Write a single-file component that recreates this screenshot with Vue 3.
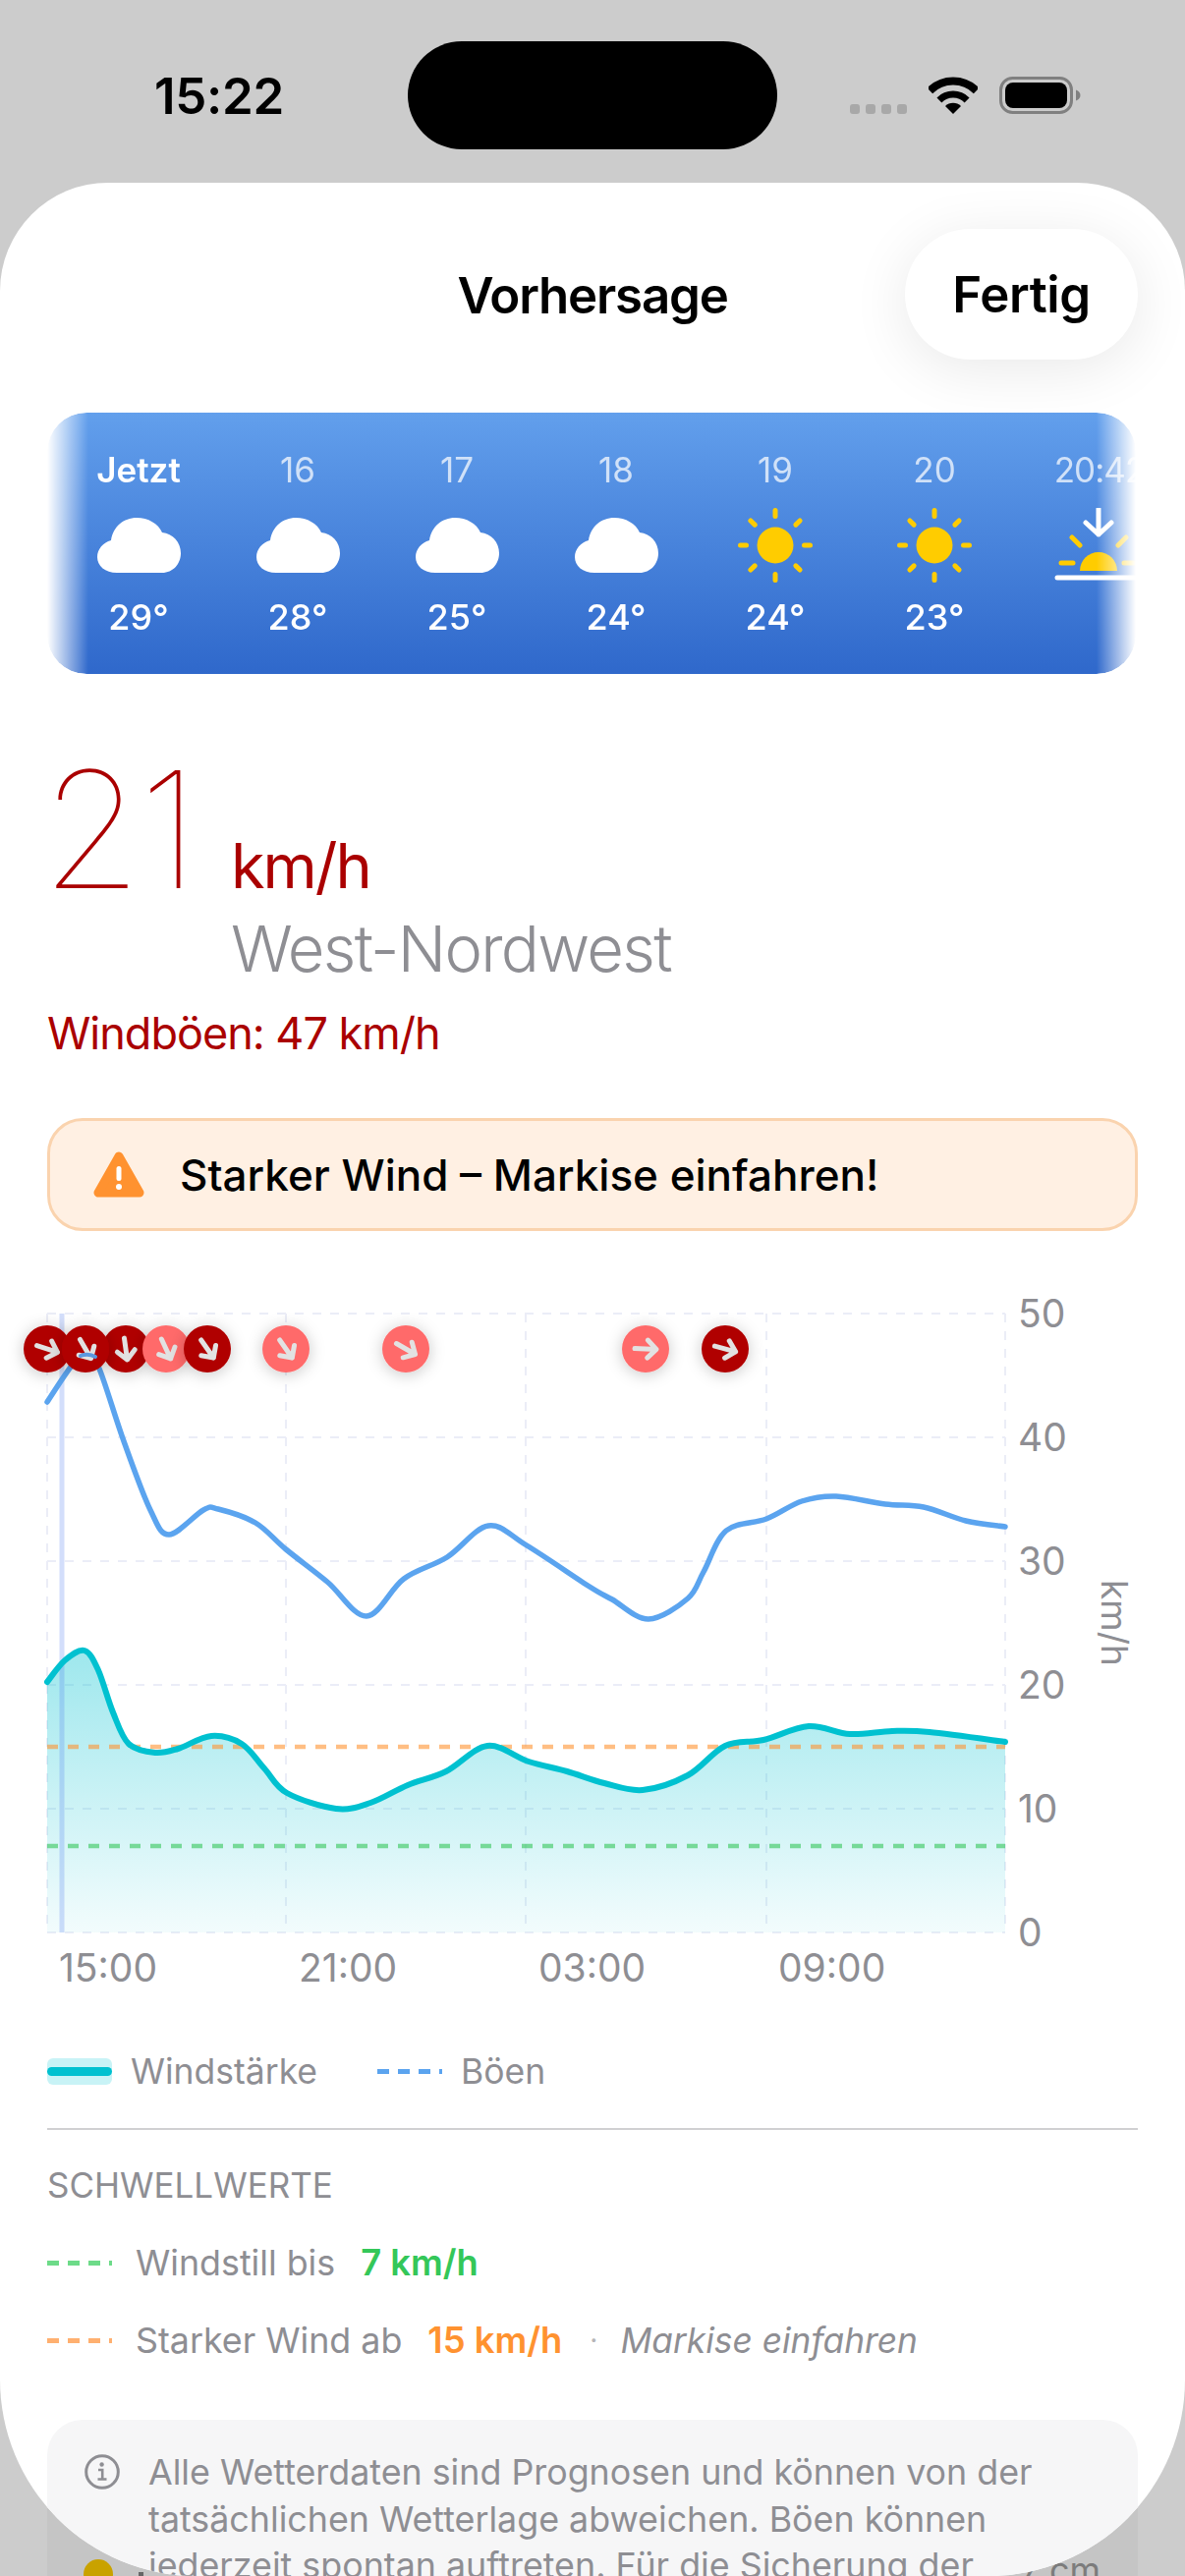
<script setup>
const hours = [
  { label: "Jetzt", temp: "29°", icon: "cloud", now: true },
  { label: "16", temp: "28°", icon: "cloud" },
  { label: "17", temp: "25°", icon: "cloud" },
  { label: "18", temp: "24°", icon: "cloud" },
  { label: "19", temp: "24°", icon: "sun" },
  { label: "20", temp: "23°", icon: "sun" },
  { label: "20:42", temp: "", icon: "sunset", wide: true },
];

const sunRays = [0, 45, 90, 135, 180, 225, 270, 315];

// chart coordinates, viewBox starts at y=1300
const GUST = [
  [48, 1427], [73, 1390], [88, 1377], [101, 1393], [126, 1467], [153, 1537], [172, 1562],
  [207, 1537], [222, 1536], [260, 1550], [291, 1577], [333, 1610], [373, 1645], [411, 1607],
  [455, 1585], [497, 1553], [536, 1573], [600, 1615], [623, 1628], [660, 1648], [700, 1627],
  [716, 1600], [739, 1558], [780, 1546], [816, 1528], [851, 1523], [901, 1531], [940, 1534],
  [983, 1548], [1023, 1554],
];
const WIND = [
  [48, 1712], [66, 1690], [86, 1680], [100, 1700], [115, 1743], [131, 1775], [158, 1784],
  [181, 1780], [215, 1767], [246, 1775], [269, 1800], [292, 1825], [342, 1841], [377, 1835],
  [415, 1817], [454, 1803], [496, 1777], [538, 1793], [577, 1803], [615, 1815], [654, 1822],
  [700, 1807], [738, 1777], [777, 1771], [823, 1757], [865, 1765], [908, 1762], [946, 1763],
  [1023, 1773],
];

function smooth(points) {
  let d = `M${points[0][0]} ${points[0][1]}`;
  for (let i = 0; i < points.length - 1; i++) {
    const p0 = points[i - 1] || points[i];
    const p1 = points[i];
    const p2 = points[i + 1];
    const p3 = points[i + 2] || p2;
    const c1x = p1[0] + (p2[0] - p0[0]) / 6;
    const c1y = p1[1] + (p2[1] - p0[1]) / 6;
    const c2x = p2[0] - (p3[0] - p1[0]) / 6;
    const c2y = p2[1] - (p3[1] - p1[1]) / 6;
    d += ` C${c1x.toFixed(1)} ${c1y.toFixed(1)} ${c2x.toFixed(1)} ${c2y.toFixed(1)} ${p2[0]} ${p2[1]}`;
  }
  return d;
}

const gustPath = smooth(GUST);
const windPath = smooth(WIND);
const windArea = `${windPath} L1023 1967 L48 1967 Z`;

const gridY = [1337, 1463, 1589, 1715, 1841, 1967];
const gridX = [48, 291, 535, 780, 1023];
const axisY = [
  { y: 1337, t: "50" }, { y: 1463, t: "40" }, { y: 1589, t: "30" },
  { y: 1715, t: "20" }, { y: 1841, t: "10" }, { y: 1967, t: "0" },
];
const axisX = [
  { x: 60, t: "15:00" }, { x: 304, t: "21:00" }, { x: 548, t: "03:00" }, { x: 792, t: "09:00" },
];

const markers = [
  { x: 48, rot: 108, fill: "#b00000" },
  { x: 128, rot: 172, fill: "#b00000" },
  { x: 87, rot: 150, fill: "#b00000" },
  { x: 169, rot: 155, fill: "#ff6b6b" },
  { x: 211, rot: 145, fill: "#b00000" },
  { x: 291, rot: 145, fill: "#ff6b6b" },
  { x: 413, rot: 120, fill: "#ff6b6b" },
  { x: 657, rot: 92, fill: "#ff6b6b" },
  { x: 738, rot: 105, fill: "#b00000" },
];
</script>

<template>
  <div class="screen">
    <!-- page behind the sheet, only peeks out at the bottom corners -->
    <div class="behind">
      <span class="behind-dot"></span>
      <span class="behind-mark"></span>
      <span class="behind-orange"></span>
      <span class="behind-text">7 cm</span>
    </div>

    <div class="status">
      <div class="time">15:22</div>
      <div class="island"></div>
      <div class="status-right">
        <div class="signal"><i></i><i></i><i></i><i></i></div>
        <svg width="50" height="38" viewBox="0 0 50 38" fill="none" stroke="#000">
          <path d="M1.3 14.3A33.5 33.5 0 0 1 48.7 14.3" stroke-width="8" />
          <path d="M10.9 23.9A20 20 0 0 1 39.1 23.9" stroke-width="7" />
          <path d="M25 38L17 30A11.3 11.3 0 0 1 33 30Z" fill="#000" stroke="none" />
        </svg>
        <svg width="83" height="38" viewBox="0 0 83 38">
          <rect x="1.5" y="1.5" width="72" height="35" rx="12" fill="none" stroke="#808080" stroke-width="3" />
          <rect x="6" y="6" width="63" height="26" rx="8" fill="#000" />
          <path d="M78 13.5C81 14.5 82.5 16.5 82.5 19C82.5 21.5 81 23.5 78 24.5Z" fill="#808080" />
        </svg>
      </div>
    </div>

    <div class="sheet">
      <header class="head">
        <div></div>
        <h1 class="title">Vorhersage</h1>
        <div class="done-wrap"><button class="done">Fertig</button></div>
      </header>

      <div class="forecast">
        <div v-for="h in hours" :key="h.label" class="hour" :class="{ wide: h.wide }">
          <span class="hour-label" :class="{ now: h.now }">{{ h.label }}</span>
          <div class="hour-icon">
            <svg v-if="h.icon === 'cloud'" width="85" height="56" viewBox="0 0 85 56">
              <path fill="#fff" d="M20 56H66C77 56 85 47 85 36C85 25 77 16 66 15C62 6 52 0 40 0C27 0 16 9 14 23C6 25 0 32 0 40C0 49 8 56 20 56Z" />
            </svg>
            <svg v-else-if="h.icon === 'sun'" width="78" height="78" viewBox="-39 -39 78 78">
              <circle r="18.5" fill="#ffcc00" />
              <rect v-for="r in sunRays" :key="r" x="-2.5" y="-38" width="5" height="11" rx="2.5" fill="#ffcc00" :transform="`rotate(${r})`" />
            </svg>
            <svg v-else width="92" height="76" viewBox="0 0 92 76">
              <path d="M45 1V27M32 15L45 27L58 15" fill="none" stroke="#fff" stroke-width="5" stroke-linecap="round" stroke-linejoin="round" />
              <path d="M26 64A19 19 0 0 1 64 64Z" fill="#ffcc00" />
              <path d="M7 56H19M18 30L26 38M73 30L65 38M71 56H84" stroke="#ffcc00" stroke-width="5" stroke-linecap="round" />
              <path d="M3 71H92" stroke="#fff" stroke-width="5" stroke-linecap="round" />
            </svg>
          </div>
          <span class="hour-temp">{{ h.temp }}</span>
        </div>
      </div>

      <section class="wind">
        <span class="wind-num">21</span>
        <span class="wind-unit">km/h</span>
        <span class="wind-dir">West-Nordwest</span>
      </section>
      <div class="gusts">Windböen: 47 km/h</div>

      <div class="alert">
        <svg width="52" height="47" viewBox="0 0 52 47">
          <path d="M26 5L5 42H47Z" fill="#ff9230" stroke="#ff9230" stroke-width="9" stroke-linejoin="round" />
          <rect x="23.5" y="15" width="5" height="15" rx="2.5" fill="#fff" />
          <circle cx="26" cy="36" r="3" fill="#fff" />
        </svg>
        <span>Starker Wind – Markise einfahren!</span>
      </div>

      <svg class="chart" width="1206" height="760" viewBox="0 1300 1206 760">
        <defs>
          <linearGradient id="windFill" gradientUnits="userSpaceOnUse" x1="0" y1="1680" x2="0" y2="1967">
            <stop offset="0" stop-color="#00c1d0" stop-opacity="0.38" />
            <stop offset="1" stop-color="#00c1d0" stop-opacity="0.05" />
          </linearGradient>
          <filter id="soft" x="-60%" y="-60%" width="220%" height="220%">
            <feDropShadow dx="0" dy="2" stdDeviation="8" flood-color="#000" flood-opacity="0.22" />
          </filter>
        </defs>

        <line v-for="y in gridY" :key="y" class="grid" x1="48" x2="1023" :y1="y" :y2="y" />
        <line v-for="x in gridX" :key="x" class="grid" :x1="x" :x2="x" y1="1337" y2="1967" />

        <path :d="windArea" fill="url(#windFill)" />
        <line x1="63" x2="63" y1="1337" y2="1967" stroke="#4f7df0" stroke-opacity="0.25" stroke-width="5" />
        <line class="limit" x1="48" x2="1023" y1="1778" y2="1778" stroke="#ff9230" />
        <line class="limit" x1="48" x2="1023" y1="1879" y2="1879" stroke="#34c759" />
        <path :d="gustPath" fill="none" stroke="#5ba4ef" stroke-width="5.5" stroke-linecap="round" />
        <path :d="windPath" fill="none" stroke="#00c1d0" stroke-width="6" stroke-linecap="round" />

        <g v-for="m in markers" :key="m.x" :transform="`translate(${m.x} 1373)`">
          <circle r="24" :fill="m.fill" filter="url(#soft)" />
          <path :transform="`rotate(${m.rot})`" d="M0 11V-11M-9 -2L0 -11L9 -2" fill="none" stroke="#e2e2e2" stroke-width="5" stroke-linecap="round" stroke-linejoin="round" />
        </g>
        <path d="M82 1380Q90 1377 97 1381" fill="none" stroke="#5a98e0" stroke-width="4" stroke-linecap="round" />

        <text v-for="a in axisY" :key="a.t" class="axis" x="1036" :y="a.y + 14">{{ a.t }}</text>
        <text v-for="a in axisX" :key="a.t" class="axis" :x="a.x" y="2017">{{ a.t }}</text>
        <text class="axis-unit" transform="translate(1121 1652) rotate(90)" text-anchor="middle">km/h</text>
      </svg>

      <div class="legend">
        <span class="swatch-wind"><i></i></span>
        <span>Windstärke</span>
        <span class="dash dash-blue"></span>
        <span>Böen</span>
      </div>

      <div class="thresholds">
        <div class="th-title">SCHWELLWERTE</div>
        <div class="th-row">
          <span class="dash dash-green"></span>
          <span>Windstill bis</span>
          <b class="green">7 km/h</b>
        </div>
        <div class="th-row">
          <span class="dash dash-orange"></span>
          <span>Starker Wind ab</span>
          <b class="orange">15 km/h</b>
          <span class="sep">·</span>
          <em>Markise einfahren</em>
        </div>
      </div>

      <div class="info">
        <svg class="info-icon" width="36" height="36" viewBox="0 0 36 36" fill="none" stroke="#8e8e93">
          <circle cx="18" cy="18" r="16.3" stroke-width="3" />
          <circle cx="17.6" cy="10.5" r="2.2" fill="#8e8e93" stroke="none" />
          <path d="M14 16H18.2V25M13.5 25.5H22.5" stroke-width="2.6" />
        </svg>
        <p>
          Alle Wetterdaten sind Prognosen und können von der<br />
          tatsächlichen Wetterlage abweichen. Böen können<br />
          jederzeit spontan auftreten. Für die Sicherung der
        </p>
      </div>
    </div>
  </div>
</template>

<style scoped>
.screen {
  position: relative;
  width: 1206px;
  height: 2622px;
  overflow: hidden;
  background: #cccccc;
  font-family: Inter, "Liberation Sans", sans-serif;
  color: #000;
}

.behind {
  position: absolute;
  left: 48px;
  right: 48px;
  top: 2440px;
  bottom: 0;
  background: #c5c5c5;
}
.behind-dot {
  position: absolute;
  left: 37px;
  top: 165px;
  width: 30px;
  height: 30px;
  border-radius: 50%;
  background: #c9a200;
}
.behind-mark {
  position: absolute;
  left: 93px;
  top: 178px;
  width: 5px;
  height: 10px;
  background: #666;
}
.behind-orange {
  position: absolute;
  left: 140px;
  top: 179px;
  width: 30px;
  height: 4px;
  background: #d07020;
}
.behind-text {
  position: absolute;
  right: 38px;
  top: 152px;
  font-size: 36px;
  line-height: 48px;
  color: #7c7c7c;
}

.status {
  position: relative;
  display: flex;
  align-items: center;
  height: 186px;
  padding-top: 8px;
  box-sizing: border-box;
}
.time {
  width: 415px;
  padding-left: 157px;
  box-sizing: border-box;
  font-size: 51px;
  font-weight: 600;
  letter-spacing: -0.3px;
}
.island {
  width: 376px;
  height: 110px;
  border-radius: 55px;
  background: #000;
}
.status-right {
  display: flex;
  align-items: center;
  gap: 22px;
  padding-left: 74px;
}
.signal {
  display: flex;
  gap: 6px;
  align-self: flex-end;
}
.signal i {
  width: 10px;
  height: 10px;
  border-radius: 3px;
  background: #a8a8a8;
}

.sheet {
  position: relative;
  height: 2436px;
  box-sizing: border-box;
  padding: 0 48px;
  background: #fff;
  border-radius: 110px 110px 200px 200px;
  overflow: hidden;
}

.head {
  display: grid;
  grid-template-columns: 1fr auto 1fr;
  align-items: center;
  padding-top: 47px;
}
.title {
  margin: 2px 0 0;
  font-size: 51px;
  font-weight: 600;
  letter-spacing: -1.2px;
}
.done-wrap {
  display: flex;
  justify-content: flex-end;
}
.done {
  width: 237px;
  height: 133px;
  border: 0;
  border-radius: 67px;
  background: #fff;
  font: 600 51px Inter, sans-serif;
  letter-spacing: -0.4px;
  color: #000;
  box-shadow: 0 10px 60px rgba(0, 0, 0, 0.09);
}

.forecast {
  display: flex;
  width: 1108px;
  height: 266px;
  margin-top: 54px;
  padding-left: 12px;
  box-sizing: border-box;
  border-radius: 40px;
  overflow: hidden;
  background: linear-gradient(#629fec, #2f68cb);
  -webkit-mask-image: linear-gradient(90deg, transparent 0, #000 42px, #000 1068px, transparent 1108px);
  mask-image: linear-gradient(90deg, transparent 0, #000 42px, #000 1068px, transparent 1108px);
}
.hour {
  flex: none;
  width: 162px;
  display: flex;
  flex-direction: column;
  align-items: center;
  color: #fff;
}
.hour.wide {
  width: 174px;
}
.hour-label {
  margin-top: 36px;
  height: 44px;
  line-height: 44px;
  font-size: 35px;
  color: rgba(255, 255, 255, 0.72);
}
.wide .hour-label {
  letter-spacing: -1px;
}
.hour-label.now {
  color: #fff;
  font-weight: 600;
}
.hour-icon {
  display: flex;
  align-items: center;
  justify-content: center;
  height: 78px;
  margin-top: 16px;
}
.hour-temp {
  margin-top: 12px;
  line-height: 44px;
  font-size: 36px;
  font-weight: 500;
}

.wind {
  display: grid;
  grid-template-columns: 188px auto;
  align-items: baseline;
  margin-top: 73px;
  justify-content: start;
}
.wind-num {
  margin-left: -6px;
  font-size: 165px;
  font-weight: 140;
  line-height: 170px;
  color: #aa0000;
  letter-spacing: -3px;
}
.wind-unit {
  margin-left: -1px;
  font-size: 63px;
  letter-spacing: -2px;
  line-height: 70px;
  color: #aa0000;
}
.wind-dir {
  grid-column: 2;
  margin: -3px 0 0 -1px;
  font-size: 65px;
  letter-spacing: -1.7px;
  line-height: 80px;
  font-weight: 300;
  color: #8e8e93;
}
.gusts {
  margin-top: 19px;
  font-size: 45px;
  letter-spacing: -1px;
  line-height: 54px;
  color: #aa0000;
}

.alert {
  display: flex;
  align-items: center;
  gap: 36px;
  height: 115px;
  margin-top: 59px;
  padding-left: 44px;
  box-sizing: border-box;
  background: #fff0e3;
  border: 3px solid #fad3ae;
  border-radius: 36px;
  font-size: 44px;
  font-weight: 500;
}

.chart {
  display: block;
  margin: 47px 0 0 -48px;
}
.grid {
  stroke: #ebedf7;
  stroke-width: 2;
  stroke-dasharray: 9 9;
}
.limit {
  stroke-width: 4.5;
  stroke-dasharray: 11 10;
  stroke-opacity: 0.6;
}
.axis {
  font-size: 39px;
  fill: #8e8e93;
}
.axis-unit {
  font-size: 37px;
  fill: #8e8e93;
}

.legend {
  display: flex;
  align-items: center;
  height: 40px;
  margin-top: 28px;
  font-size: 35.5px;
  color: #8e8e93;
}
.swatch-wind {
  display: flex;
  align-items: center;
  width: 66px;
  height: 27px;
  margin-right: 19px;
  border-radius: 6px;
  background: #c8f3f6;
}
.swatch-wind i {
  display: block;
  width: 66px;
  height: 9px;
  border-radius: 5px;
  background: #00c1d0;
}
.dash {
  flex: none;
  display: block;
  width: 66px;
  height: 5px;
  background: repeating-linear-gradient(90deg, var(--c) 0 12px, transparent 12px 21px);
}
.dash-blue {
  --c: #5ba4ef;
  margin: 0 19px 0 61px;
}
.dash-green {
  --c: #6ddb89;
}
.dash-orange {
  --c: #ffb070;
}

.thresholds {
  margin-top: 38px;
  padding-top: 34px;
  border-top: 2px solid #d0d0d2;
  font-size: 35.8px;
  color: #8e8e93;
}
.th-title {
  font-size: 35px;
  line-height: 44px;
}
.th-row {
  display: flex;
  align-items: center;
  height: 44px;
  margin-top: 35px;
}
.th-row .dash {
  margin-right: 24px;
}
.th-row b {
  margin-left: 26px;
  font-size: 36.4px;
  font-weight: 600;
}
.green {
  color: #34c759;
}
.orange {
  color: #ff9230;
}
.sep {
  margin: 0 23px 0 28px;
  font-size: 28px;
  color: #b5b5b8;
}
.th-row em {
  font-style: italic;
  font-size: 35.3px;
}

.info {
  display: flex;
  align-items: flex-start;
  gap: 29px;
  height: 220px;
  margin-top: 59px;
  padding: 30px 0 0 38px;
  box-sizing: border-box;
  background: #f6f6f7;
  border-radius: 36px;
  color: #8e8e93;
}
.info-icon {
  flex: none;
  margin-top: 5px;
}
.info p {
  margin: 0;
  font-size: 35.8px;
  line-height: 47.5px;
}
</style>
